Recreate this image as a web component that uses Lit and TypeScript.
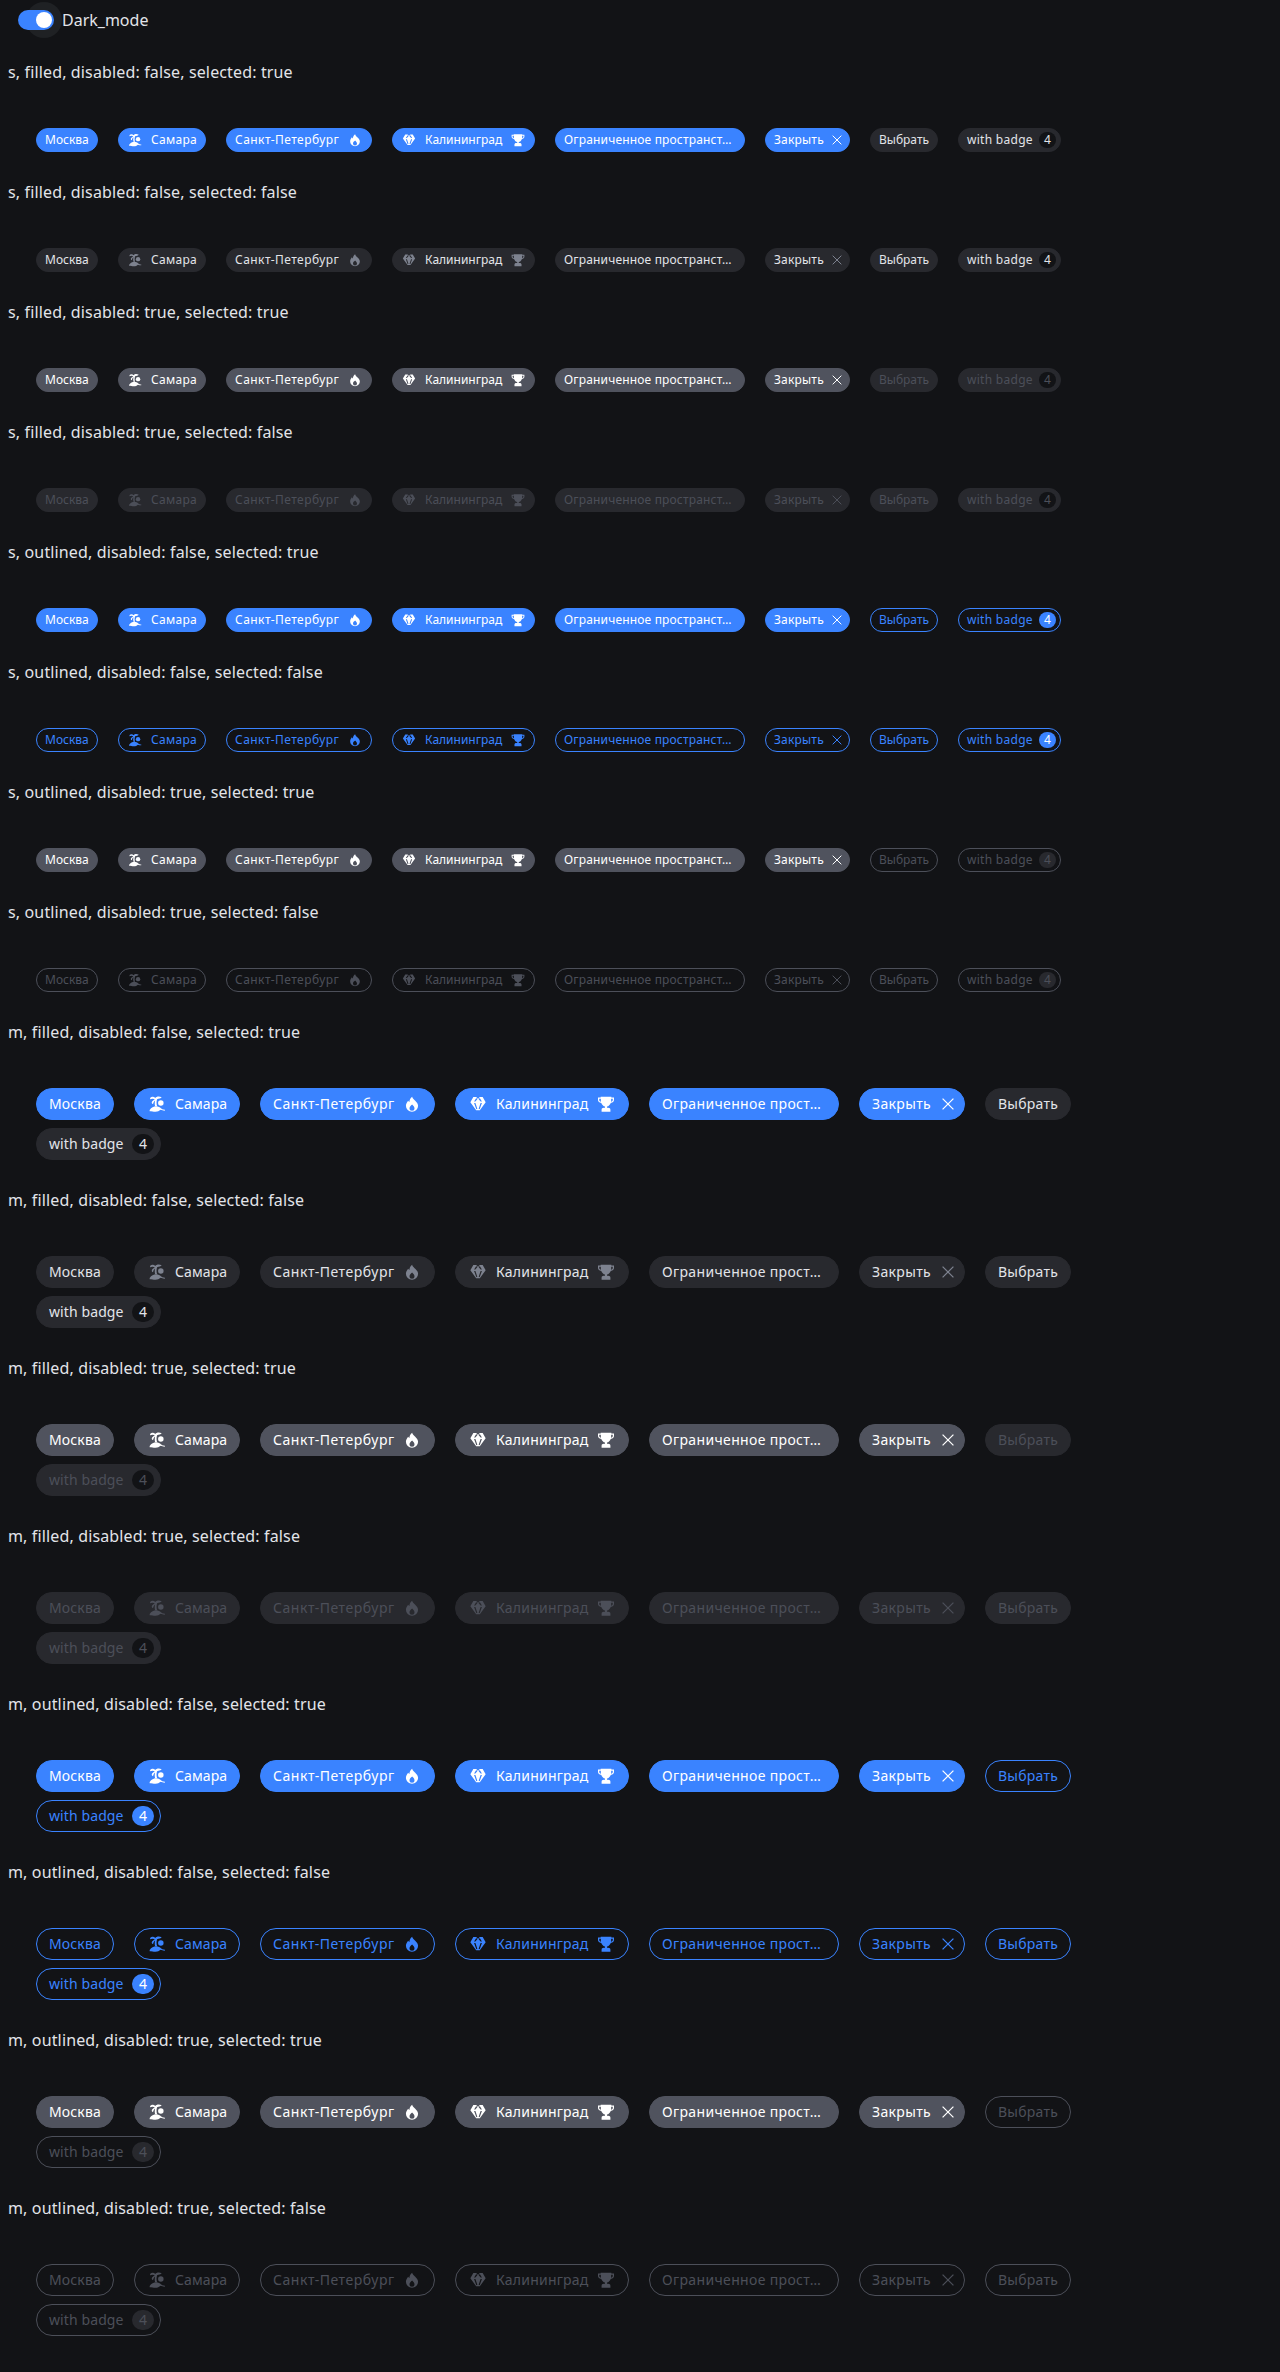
import { LitElement, html, css, svg, nothing } from 'lit';

const icons = {
  palm: svg`<path d="M9.400 6.600C8 5.200 5.600 5.300 3.700 6.400 3.300 4.500 5 3.200 6.800 3.400c1.300.1 2.200.6 3.100 1.300C11.400 2.900 14.600 2.300 17.600 4c-.8 1.500-3.400 1.700-5.500 2.200-.9 2.900-.8 5.700 0 8.400H9.700c-.6-2.500-.5-4.700 0-6.900C8.400 8.800 7.400 10.400 7.300 12.200 4.500 11.200 5.600 8.200 9.400 6.600Z"/><circle cx="16.600" cy="10.700" r="3.300"/><path d="M3.200 19.200C5.200 16.400 8 14.800 11 14.800c2.800 0 4.300 1.300 6 2.600 1.400 1 2.600 1.400 4.400 1.400v1.200c-2 .1-3.600-.4-5-1-2.200 1.400-3.300 2.400-6.200 2.400-2.800 0-4.200-.2-7-.6Z"/>`,
  flame: svg`<path fill-rule="evenodd" d="M12.200 3.200C12.600 6.800 19.300 9 19.300 14.200A7.300 7 0 0 1 4.700 14.200C4.700 11.200 6.300 9.700 7.400 8c.5.8.9 1.300 1.500 1.700C8.900 7 10.200 4.500 12.200 3.200ZM12.200 12.700C10.600 14 9 15.300 9 17.200a3 3 0 0 0 6 0c0-1.900-1.400-3-2.800-4.500Z"/>`,
  gem: svg`<path fill-rule="evenodd" d="M6.400 3.600H9.900L12 6 14.100 3.600H17.600L21.200 9.800 14.200 19.500H9.800L2.800 9.800ZM9.900 4.800 7.300 9.100H8.800L11.200 6.300ZM14.100 4.800 12.800 6.300 15.200 9.100H16.700ZM7.300 10.700 10 18.300 11.200 17.800 8.900 10.700ZM16.700 10.700H15.100L12.800 17.800 14 18.300Z"/>`,
  trophy: svg`<path fill-rule="evenodd" d="M5.600 3.400h12.800v.8h3.200v3.100c0 1.900-1.600 3.200-3.900 3.400-.9 2.300-2.500 3.800-4.500 4.400v1.500h1.400c1.700 0 2.700 1 2.700 2.200v2.400H6.700v-2.400c0-1.200 1-2.200 2.700-2.200h1.400v-1.500c-2-.6-3.600-2.100-4.500-4.400C4 10.500 2.400 9.200 2.400 7.300V4.200h3.200ZM3.900 5.600v1.600c0 .9.700 1.700 1.900 2V5.600ZM18.200 5.600v3.600c1.200-.3 1.900-1.100 1.900-2V5.600Z"/>`,
  close: svg`<path d="M5.500 5.500 18.500 18.500M18.500 5.500 5.500 18.500" fill="none" stroke="currentColor" stroke-width="1.500"/>`,
};
type IconName = keyof typeof icons;
type Size = 's' | 'm';

interface ChipSpec {
  text: string | Record<Size, string>;
  name: string;
  before?: IconName;
  after?: IconName;
  badge?: number;
  selectable: boolean;
}

const chips: ChipSpec[] = [
  { text: 'Москва', name: 'moscow', selectable: true },
  { text: 'Самара', name: 'samara', before: 'palm', selectable: true },
  { text: 'Санкт-Петербург', name: 'spb', after: 'flame', selectable: true },
  { text: 'Калининград', name: 'kaliningrad', before: 'gem', after: 'trophy', selectable: true },
  { text: { s: 'Ограниченное пространст…', m: 'Ограниченное прост…' }, name: 'limited', selectable: true },
  { text: 'Закрыть', name: 'closable', after: 'close', selectable: true },
  { text: 'Выбрать', name: 'choose', selectable: false },
  { text: 'with badge', name: 'badged', badge: 4, selectable: false },
];

const sizes: Size[] = ['s', 'm'];
const looks = ['filled', 'outlined'];

class AppRoot extends LitElement {
  static styles = css`
    :host {
      display: block;
      box-sizing: border-box;
      min-height: 2372px;
      padding: 0 8px 8px;
      background: #121316;
      color: #e2e4e9;
      font: 16px/24px "Noto Sans", sans-serif;
    }
    .toggle { display: flex; align-items: center; gap: 8px; height: 24px; padding: 8px 0 28px 10px; }
    .toggle-box { position: relative; display: flex; }
    .halo { position: absolute; left: 8px; top: -8px; width: 36px; height: 36px; border-radius: 50%; background: #1f2124; }
    .track {
      position: relative;
      display: flex; justify-content: flex-end; box-sizing: border-box;
      width: 36px; height: 20px; padding: 2px; border-radius: 10px; background: #3a83ff;
    }
    .thumb { width: 16px; height: 16px; border-radius: 50%; background: #fff; }
    .title { height: 24px; letter-spacing: 0.14px; }
    .row {
      display: flex; flex-wrap: wrap; gap: 8px 20px;
      box-sizing: border-box; width: 1128px; padding: 44px 0 28px 28px;
    }
    .chip {
      display: flex; align-items: center; gap: 8px; box-sizing: border-box;
      border: 1px solid #28292e; border-radius: 16px;
      background: #28292e; color: #e2e4e9;
      --badge-bg: #121316; --badge-fg: #e2e4e9; --icon: #7d828f;
    }
    .s .chip { height: 24px; padding: 0 8px; font-size: 12px; line-height: 16px; }
    .m .chip { height: 32px; padding: 0 12px; font-size: 14px; line-height: 20px; }
    .disabled .chip { color: #4c4f59; --icon: #4c4f59; --badge-fg: #4c4f59; }
    .outlined .chip { background: transparent; border-color: #3a83ff; color: #3a83ff; --icon: #3a83ff; --badge-bg: #3a83ff; --badge-fg: #fff; }
    .outlined.disabled .chip { border-color: #4c4f59; color: #4c4f59; --icon: #4c4f59; --badge-bg: #28292e; --badge-fg: #4c4f59; }
    .row.selected .chip.on { background: #3a83ff; border-color: #3a83ff; color: #fff; --icon: #fff; }
    .row.selected.disabled .chip.on { background: #50535e; border-color: #50535e; }
    .label { flex: none; white-space: nowrap; }
    svg { flex: none; display: block; fill: currentColor; color: var(--icon); }
    .s svg { width: 16px; height: 16px; }
    .m svg { width: 20px; height: 20px; }
    .badge {
      display: flex; align-items: center; justify-content: center;
      border-radius: 10px; background: var(--badge-bg); color: var(--badge-fg);
    }
    .s .badge { width: 17px; height: 16px; }
    .m .badge { width: 22px; height: 20px; }

    .s .moscow .label { width: 44px; }
    .s .samara .label { width: 46px; letter-spacing: 0.3px; }
    .s .spb .label { width: 104px; letter-spacing: 0.45px; }
    .s .kaliningrad .label { width: 77px; }
    .s .limited .label { width: 172px; letter-spacing: 0.17px; }
    .s .closable .label { width: 50px; letter-spacing: 0.2px; }
    .s .choose .label { width: 50px; }
    .s .badged .label { width: 66px; letter-spacing: 0.28px; }
    .s .closable { padding-right: 4px; gap: 5px; }
    .s .badged { padding-right: 4px; gap: 6px; }

    .m .moscow .label { width: 52px; letter-spacing: 0.15px; }
    .m .samara .label { width: 52px; letter-spacing: 0.1px; }
    .m .spb .label { width: 121px; letter-spacing: 0.53px; }
    .m .kaliningrad .label { width: 92px; letter-spacing: 0.22px; }
    .m .limited .label { width: 164px; letter-spacing: 0.35px; }
    .m .closable .label { width: 59px; letter-spacing: 0.35px; }
    .m .choose .label { width: 60px; letter-spacing: 0.25px; }
    .m .badged .label { width: 75px; letter-spacing: 0.1px; }
    .m .closable { padding-right: 6px; gap: 7px; }
    .m .badged { padding-right: 6px; gap: 8px; }
  `;

  private icon(name?: IconName) {
    return name ? html`<svg viewBox="0 0 24 24">${icons[name]}</svg>` : nothing;
  }

  private chip(c: ChipSpec, size: Size) {
    const text = typeof c.text === 'string' ? c.text : c.text[size];
    return html`<div class="chip ${c.name} ${c.selectable ? 'on' : ''}">
      ${this.icon(c.before)}<span class="label">${text}</span>${this.icon(c.after)}
      ${c.badge ? html`<span class="badge">${c.badge}</span>` : nothing}
    </div>`;
  }

  private section(size: Size, look: string, disabled: boolean, selected: boolean) {
    return html`<section>
      <div class="title">${size}, ${look}, disabled: ${disabled}, selected: ${selected}</div>
      <div class="row ${size} ${look} ${disabled ? 'disabled' : ''} ${selected ? 'selected' : ''}">
        ${chips.map((c) => this.chip(c, size))}
      </div>
    </section>`;
  }

  render() {
    return html`
      <div class="toggle">
        <span class="toggle-box"><span class="halo"></span><span class="track"><span class="thumb"></span></span></span>
        <span>Dark_mode</span>
      </div>
      ${sizes.map((size) =>
        looks.map((look) =>
          [false, true].map((disabled) =>
            [true, false].map((selected) => this.section(size, look, disabled, selected)))))}
    `;
  }
}
customElements.define('app-root', AppRoot);
